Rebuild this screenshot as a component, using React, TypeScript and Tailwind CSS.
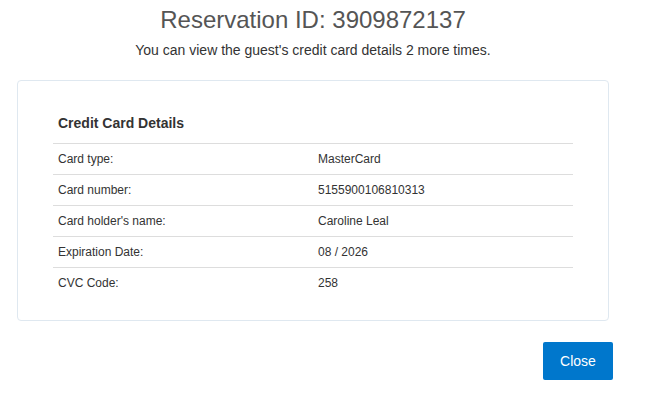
import React from "react";

const rows: [string, string][] = [
  ["Card type:", "MasterCard"],
  ["Card number:", "5155900106810313"],
  ["Card holder's name:", "Caroline Leal"],
  ["Expiration Date:", "08 / 2026"],
  ["CVC Code:", "258"],
];

export default function App() {
  return (
    <div
      className="w-[657px] h-[409px] bg-white text-[#333]"
      style={{ fontFamily: '"Liberation Sans", Arial, sans-serif' }}
    >
      <div className="ml-[17px] w-[592px] flex flex-col">
        <h1 className="pt-[6px] h-[34px] text-[24px] leading-[28px] text-center text-[#555] font-normal">
          Reservation ID: 3909872137
        </h1>
        <p className="mt-[6px] text-[14px] leading-[20px] text-center text-[#333]">
          You can view the guest's credit card details 2 more times.
        </p>
        <div className="mt-[20px] border border-[#dfe8f0] rounded-[4px] pt-[34px] pb-[22px] px-[35px]">
          <div className="h-[28px] text-[14px] leading-[16px] font-bold text-[#333] pl-[5px]">
            Credit Card Details
          </div>
          {rows.map(([label, value]) => (
            <div
              key={label}
              className="flex h-[31px] border-t border-[#dddddd] text-[12px] items-center"
            >
              <div className="w-1/2 pl-[5px]">{label}</div>
              <div className="w-1/2 pl-[5px]">{value}</div>
            </div>
          ))}
        </div>
        <div className="mt-[21px] flex justify-end -mr-[4px]">
          <button className="h-[38px] w-[70px] bg-[#0077cc] text-white text-[14px] rounded-[2px]">
            Close
          </button>
        </div>
      </div>
    </div>
  );
}
